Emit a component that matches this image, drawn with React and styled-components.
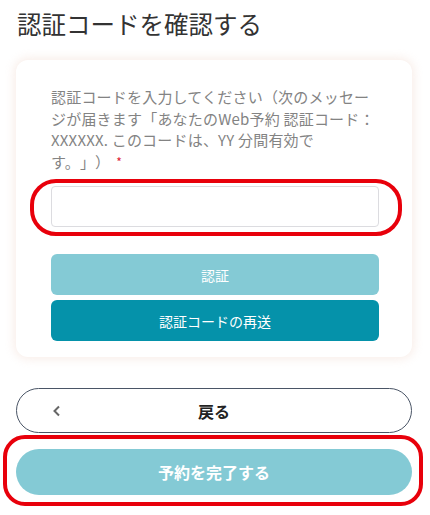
import React from "react";
import styled, { createGlobalStyle } from "styled-components";

const GlobalStyle = createGlobalStyle`
  body {
    margin: 0;
    background: #fff;
    font-family: "Noto Sans CJK JP", "Noto Sans", sans-serif;
    text-spacing-trim: space-all;
  }
`;

const Page = styled.div`
  width: 430px;
  box-sizing: border-box;
  padding: 8px 18px 20px 16px;
`;

const Title = styled.h1`
  margin: 0 0 0 1px;
  font-size: 24.5px;
  font-weight: 400;
  line-height: 32px;
  color: #333;
`;

const Card = styled.div`
  margin-top: 20px;
  background: #fff;
  border-radius: 12px;
  box-shadow: 0 0 10px 2px rgba(240, 215, 205, 0.45);
  padding: 26px 33px 16px 35px;
`;

const Label = styled.p`
  margin: 0;
  font-size: 15px;
  line-height: 21.5px;
  color: #838383;
  letter-spacing: 0.2px;
`;

const Required = styled.span`
  color: #d23;
  font-size: 12px;
  margin-left: 6px;
  vertical-align: top;
`;

const Highlight = styled.div`
  position: relative;
  margin-top: ${(p) => p.$top || 0}px;
`;

const Ring = styled.div`
  position: absolute;
  top: ${(p) => p.$t}px;
  left: ${(p) => p.$l}px;
  right: ${(p) => p.$r}px;
  bottom: ${(p) => p.$b}px;
  border: 4px solid #e8000b;
  border-radius: ${(p) => p.$radius}px;
  pointer-events: none;
`;

const Input = styled.input`
  display: block;
  width: 100%;
  box-sizing: border-box;
  height: 41px;
  border: 1px solid #dcdce0;
  border-radius: 4px;
  background: #fff;
  outline: none;
`;

const Actions = styled.div`
  display: flex;
  flex-direction: column;
  gap: 5px;
  margin-top: 27px;
`;

const SquareButton = styled.button`
  height: 41px;
  border: none;
  border-radius: 6px;
  background: ${(p) => (p.$dark ? "#0592aa" : "#84cad5")};
  color: #fff;
  font-family: inherit;
  font-size: 14px;
`;

const Footer = styled.div`
  display: flex;
  flex-direction: column;
  margin-top: 31px;
`;

const BackButton = styled.button`
  position: relative;
  height: 45px;
  border: 1.5px solid #4a5566;
  border-radius: 23px;
  background: #fff;
  color: #222;
  font-family: inherit;
  font-size: 16px;
  font-weight: 700;
`;

const Chevron = styled.svg`
  position: absolute;
  left: 35px;
  top: 50%;
  transform: translateY(-50%);
`;

const CompleteButton = styled.button`
  width: 100%;
  height: 46px;
  border: none;
  border-radius: 23px;
  background: #84cad5;
  color: #fff;
  font-family: inherit;
  font-size: 16px;
  font-weight: 700;
`;

export default function App() {
  return (
    <>
      <GlobalStyle />
      <Page>
        <Title>認証コードを確認する</Title>
        <Card>
          <Label>
            認証コードを入力してください（次のメッセー
            <br />
            ジが届きます「あなたのWeb予約 認証コード：
            <br />
            XXXXXX. このコードは、YY 分間有効で
            <br />
            す。」）<Required>*</Required>
          </Label>
          <Highlight $top={14}>
            <Input type="text" />
            <Ring $t={-7} $l={-21} $r={-23} $b={-9} $radius={26} />
          </Highlight>
          <Actions>
            <SquareButton>認証</SquareButton>
            <SquareButton $dark>認証コードの再送</SquareButton>
          </Actions>
        </Card>
        <Footer>
          <BackButton>
            <Chevron width="10" height="12" viewBox="0 0 10 12">
              <path d="M7 1.5 L2.5 6 L7 10.5" fill="none" stroke="#666" strokeWidth="2" />
            </Chevron>
            戻る
          </BackButton>
          <Highlight $top={16}>
            <CompleteButton>予約を完了する</CompleteButton>
            <Ring $t={-14} $l={-13} $r={-11} $b={-11} $radius={22} />
          </Highlight>
        </Footer>
      </Page>
    </>
  );
}
